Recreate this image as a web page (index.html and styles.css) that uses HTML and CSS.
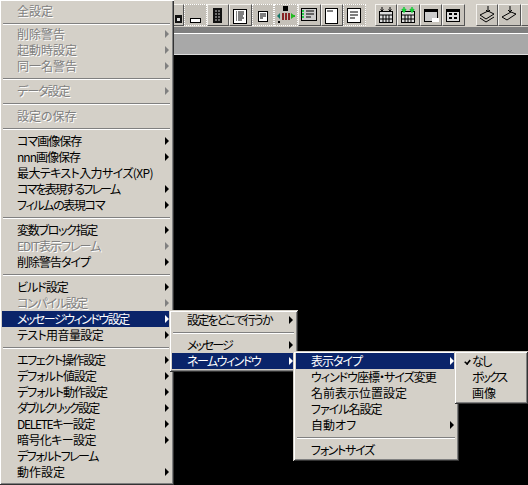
FILE: index.html
```html
<!DOCTYPE html>
<html lang="ja">
<head>
  <meta charset="UTF-8" />
  <title>設定メニュー</title>
  <link rel="stylesheet" href="styles.css">
</head>
<body>

  <div class="toolbar">
    <div class="tool tool-cut"><svg width="10" height="22"><rect x="2" y="12" width="7" height="8" fill="#111"/><rect x="4" y="15" width="3" height="3" fill="#ddd"/></svg></div>
    <div class="tool dither"><svg width="16" height="22"><rect x="3.500" y="15.500" width="10" height="4" fill="#fff" stroke="#000"/></svg></div>
    <div class="tool"><svg width="16" height="22"><rect x="3" y="5" width="9" height="15" fill="#111"/><path d="M5 8h5M5 11h5M5 14h5M5 17h5" stroke="#ccc" stroke-dasharray="2 1"/></svg></div>
    <div class="tool"><svg width="16" height="22"><rect x="1.500" y="6.500" width="13" height="14" fill="#fff" stroke="#000"/><path d="M4 9h1M6 9h6M4 11h1M6 11h6M4 13h1M6 13h5M4 15h1M6 15h6M4 17h1M6 17h4" stroke="#000"/></svg></div>
    <div class="tool dither"><svg width="16" height="22"><rect x="3.500" y="8.500" width="9" height="10" fill="#fff" stroke="#000"/><path d="M5 11h6M5 13h6M5 15h3" stroke="#000"/></svg></div>
    <div class="tool dither wide"><svg width="20" height="22"><rect x="7" y="3" width="5" height="5" fill="#000"/><rect x="6" y="10" width="2" height="7" fill="#822"/><rect x="9" y="10" width="2" height="7" fill="#822"/><rect x="12" y="10" width="2" height="7" fill="#822"/><path d="M15 13h4" stroke="#2b2" stroke-width="2"/><path d="M15 10l4 3-4 3z" fill="#2b2"/><path d="M1 13l3-3v6z" fill="#176"/><rect x="2" y="18" width="2" height="2" fill="#000"/></svg></div>
    <div class="tool"><svg width="18" height="22"><rect x="1.500" y="5.500" width="15" height="12" fill="#ccc" stroke="#000"/><path d="M2 8h2M2 11h2M2 14h2" stroke="#2c4" stroke-width="2"/><path d="M6 8h8M6 11h8M6 14h5" stroke="#000"/></svg></div>
    <div class="tool"><svg width="16" height="22"><rect x="1.500" y="5.500" width="12" height="15" fill="#fff" stroke="#000"/><path d="M3 8h6" stroke="#000"/></svg></div>
    <div class="tool tool-last dither"><svg width="16" height="22"><rect x="1.500" y="5.500" width="13" height="14" fill="#fff" stroke="#000"/><path d="M4 9h8M4 12h8M4 15h5" stroke="#000"/></svg></div>
    <div class="tool"><svg width="16" height="22"><rect x="1.500" y="8.500" width="13" height="11" fill="#ddd" stroke="#000"/><path d="M2 12h12M5 12v7M8 12v7M11 12v7M2 16h12" stroke="#000"/><path d="M4 4v4M2.500 6.500L4 8l1.500-1.500M12 4v4M10.500 6.500L12 8l1.500-1.500" stroke="#000" fill="none"/></svg></div>
    <div class="tool"><svg width="16" height="22"><rect x="1.500" y="8.500" width="13" height="11" fill="#ddd" stroke="#000"/><path d="M2 12h12M5 12v7M8 12v7M11 12v7M2 16h12" stroke="#000"/><path d="M4 4v4M2 6l2 3 2-3M12 4v4M10 6l2 3 2-3" stroke="#1c3" fill="none" stroke-width="1.500"/></svg></div>
    <div class="tool"><svg width="16" height="22"><rect x="1.500" y="6.500" width="13" height="12" fill="#ccc" stroke="#000"/><path d="M2 8h12" stroke="#000" stroke-width="2"/><rect x="9" y="15" width="7" height="4" fill="#fff"/></svg></div>
    <div class="tool tool-gap"><svg width="16" height="22"><rect x="1.500" y="6.500" width="13" height="12" fill="#ddd" stroke="#000"/><path d="M2 8h12" stroke="#000" stroke-width="2"/><path d="M4 11h3M9 11h3M4 15h3M9 15h3" stroke="#000" stroke-width="2"/></svg></div>
    <div class="tool"><svg width="18" height="22"><path d="M2 12l8-4 6 3-8 5zM2 15l6 4 8-5M10 3v6M8 7l2 2 2-2" fill="none" stroke="#000"/></svg></div>
    <div class="tool"><svg width="18" height="22"><path d="M2 14l9-5 5 2-9 6zM10 3v6M8 7l2 2 2-2" fill="none" stroke="#000"/></svg></div>
    <div class="tool"><svg width="8" height="22"><path d="M6 5v5M4 8l2 2 2-2" fill="none" stroke="#000"/></svg></div>
  </div>
  <div class="band"></div>
  <div class="workspace"></div>

  <div class="menu menu-main">
    <div class="item off">全設定</div>
    <div class="sep"></div>
    <div class="item off sub">削除警告</div>
    <div class="item off sub">起動時設定</div>
    <div class="item off sub">同一名警告</div>
    <div class="sep"></div>
    <div class="item off sub t10">データ設定</div>
    <div class="sep"></div>
    <div class="item off">設定の保存</div>
    <div class="sep"></div>
    <div class="item sub t10">コマ画像保存</div>
    <div class="item sub t10">nnn画像保存</div>
    <div class="item t05">最大テキスト入力サイズ(XP)</div>
    <div class="item sub t18">コマを表現するフレーム</div>
    <div class="item sub t13">フィルムの表現コマ</div>
    <div class="sep"></div>
    <div class="item sub t13">変数ブロック指定</div>
    <div class="item off sub t10">EDIT表示フレーム</div>
    <div class="item sub t10">削除警告タイプ</div>
    <div class="sep"></div>
    <div class="item sub t10">ビルド設定</div>
    <div class="item off sub t13">コンパイル設定</div>
    <div class="item on sub t15">メッセージウィンドウ設定</div>
    <div class="item sub t05">テスト用音量設定</div>
    <div class="sep"></div>
    <div class="item sub t13">エフェクト操作設定</div>
    <div class="item sub t10">デフォルト値設定</div>
    <div class="item sub t10">デフォルト動作設定</div>
    <div class="item sub t18">ダブルクリック設定</div>
    <div class="item sub t13">DELETEキー設定</div>
    <div class="item sub t05">暗号化キー設定</div>
    <div class="item t15">デフォルトフレーム</div>
    <div class="item sub">動作設定</div>
  </div>

  <div class="menu menu-message">
    <div class="item sub t18">設定をどこで行うか</div>
    <div class="sep"></div>
    <div class="item sub t20">メッセージ</div>
    <div class="item on sub t15">ネームウィンドウ</div>
  </div>

  <div class="menu menu-name">
    <div class="item on sub t10">表示タイプ</div>
    <div class="item t10">ウィンドウ座標・サイズ変更</div>
    <div class="item">名前表示位置設定</div>
    <div class="item t10">ファイル名設定</div>
    <div class="item sub">自動オフ</div>
    <div class="sep"></div>
    <div class="item t13">フォントサイズ</div>
  </div>

  <div class="menu menu-type">
    <div class="item checked t15">なし</div>
    <div class="item t20">ボックス</div>
    <div class="item">画像</div>
  </div>

</body>
</html>
```

FILE: styles.css
```css
html, body {
  margin: 0;
  height: 485px;
  overflow: hidden;
}
body {
  position: relative;
  background-color: black;
  font-family: "Noto Sans CJK JP", sans-serif;
  font-size: 12px;
}

.toolbar {
  display: flex;
  height: 27px;
  padding-left: 173px;
  background-color: #d4d0c8;
  overflow: hidden;
}
.tool {
  display: flex;
  justify-content: center;
  align-items: flex-start;
  box-sizing: border-box;
  width: 22.500px;
  height: 22px;
  margin-top: 4px;
  background-color: #c8c4bc;
  border: 1px solid;
  border-color: #f4f2ee #555 #555 #f4f2ee;
  flex-shrink: 0;
}
.tool svg {
  margin-top: -2px;
}
.tool-cut {
  width: 11px;
  border-left: none;
}
.tool-last {
  margin-right: 9px;
}
.tool-gap {
  margin-right: 11px;
}
.wide {
  width: 24px;
}
.dither {
  background-color: #c4c0b8;
  border: 1px dotted #fff;
}

.band {
  height: 6px;
  background-color: #808080;
  border-bottom: 1px solid #fff;
}
.workspace {
  height: 20px;
  background-color: #a8a8a8;
  border-bottom: 1px solid #ddd;
}

.menu {
  position: absolute;
  box-sizing: border-box;
  padding: 2px 3px 3px;
  background-color: #d4d0c8;
  color: black;
  box-shadow: inset 1px 1px 0 #d4d0c8, inset -1px -1px 0 #333, inset 2px 2px 0 #fff, inset -2px -2px 0 #808080;
}
.menu-main {
  left: -1px;
  top: 0;
  width: 175px;
  height: 485px;
  padding-top: 3px;
  box-shadow: inset 0 1px 0 #fff, inset 1px 0 0 #d4d0c8, inset -1px -1px 0 #333, inset 2px 0 0 #fff, inset -2px -2px 0 #808080;
}
.menu-main .sep:nth-child(2) {
  margin-bottom: 1px;
}
.menu-message {
  left: 169px;
  top: 310px;
  width: 129px;
}
.menu-name {
  left: 293px;
  top: 351px;
  width: 166px;
}
.menu-type {
  left: 454px;
  top: 351px;
  width: 74px;
}

.item {
  position: relative;
  height: 16px;
  line-height: 16px;
  padding-left: 15px;
  white-space: nowrap;
  font-feature-settings: "palt";
}
.off {
  color: #808080;
  text-shadow: 1px 1px 0 #fff;
}
.on {
  background-color: #0a246a;
  color: white;
}

.t05 { letter-spacing: -0.6px; }
.t10 { letter-spacing: -1px; }
.t13 { letter-spacing: -1.3px; }
.t15 { letter-spacing: -1.5px; }
.t18 { letter-spacing: -1.8px; }
.t20 { letter-spacing: -2px; }

/* submenu arrow */
.sub::after {
  content: "";
  position: absolute;
  right: 2px;
  top: 4px;
  border-left: 4px solid black;
  border-top: 4px solid transparent;
  border-bottom: 4px solid transparent;
}
.off::after {
  border-left-color: #808080;
}
.on::after {
  border-left-color: white;
}

.checked::before {
  content: "";
  position: absolute;
  left: 8px;
  top: 5px;
  width: 3px;
  height: 5px;
  border: solid black;
  border-width: 0 2px 2px 0;
  transform: rotate(40deg) scale(0.8);
}

.sep {
  height: 1px;
  margin: 4px 1px 3px;
  background-color: #808080;
  border-bottom: 1px solid white;
}
```
